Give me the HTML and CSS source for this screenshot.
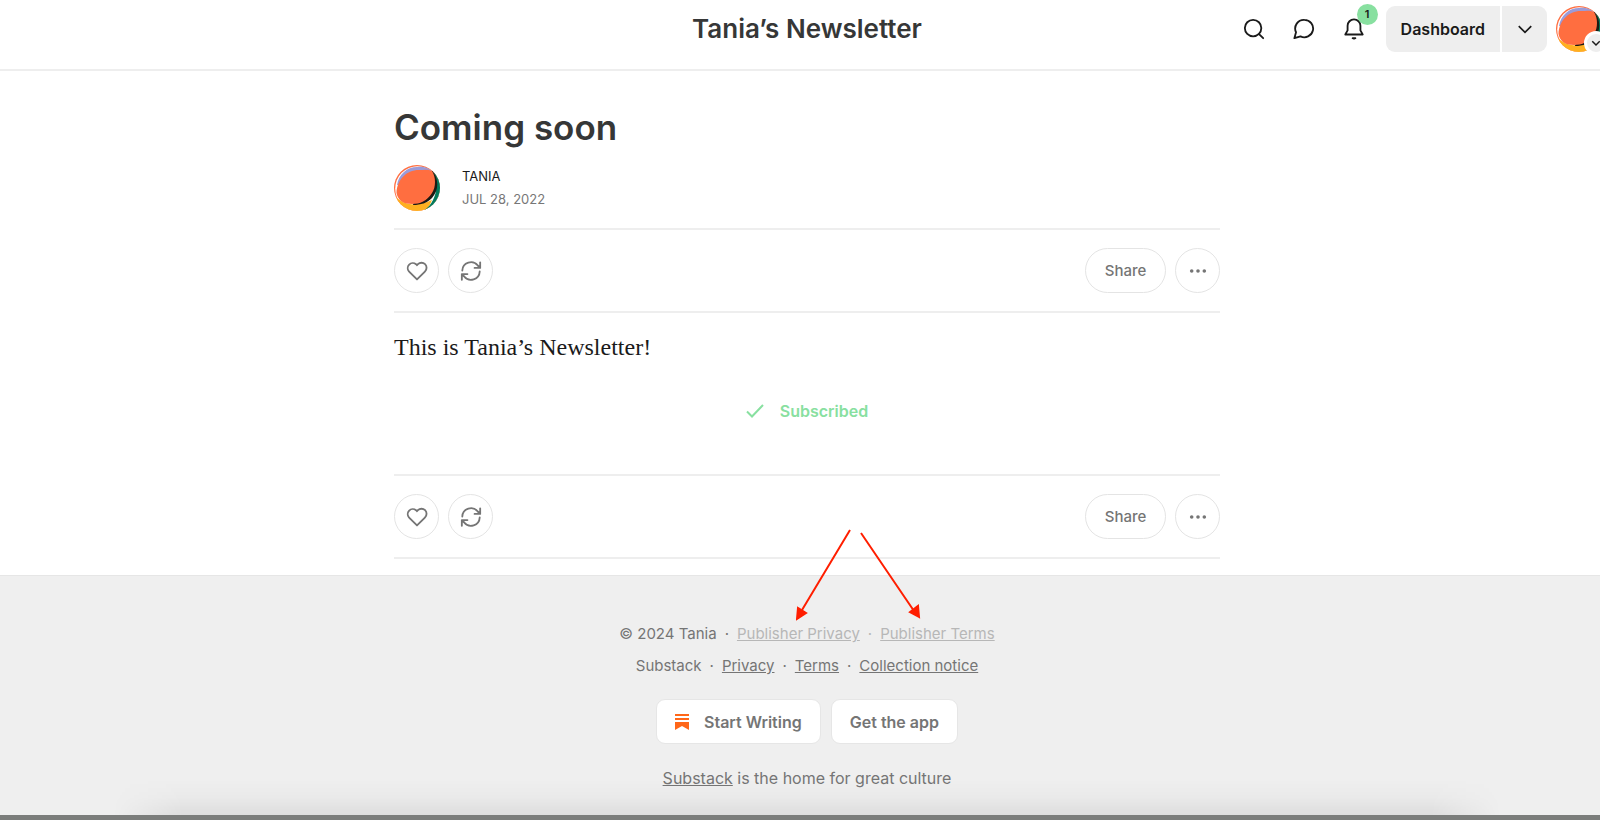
FILE: index.html
```html
<!DOCTYPE html>
<html lang="en">
	<head>
		<meta charset="UTF-8">
		<meta name="viewport" content="width=device-width, initial-scale=1">
		<title>Coming soon - Tania's Newsletter</title>
		<link rel="stylesheet" href="styles.css">
	</head>
	<body>
		<!-- shared icons -->
		<svg class="sprite" aria-hidden="true">
			<symbol id="icon-heart" viewBox="0 0 24 24">
				<path d="M20.8 4.6a5.5 5.5 0 0 0-7.8 0L12 5.7l-1.1-1.1a5.5 5.5 0 0 0-7.7 7.8l1 1L12 21.2l7.8-7.8 1-1a5.5 5.5 0 0 0 0-7.8z"/>
			</symbol>
			<symbol id="icon-restack" viewBox="0 0 24 24">
				<path d="M2.5 11.5A9.5 9.5 0 0 1 19.4 6L22 8.6M22 2.5v6.1h-6.1M21.5 12.5A9.5 9.5 0 0 1 4.6 18L2 15.4M2 21.5v-6.1h6.1"/>
			</symbol>
			<symbol id="icon-dots" viewBox="0 0 20 20">
				<circle cx="3" cy="10" r="2"/>
				<circle cx="10" cy="10" r="2"/>
				<circle cx="17" cy="10" r="2"/>
			</symbol>
			<symbol id="icon-chevron" viewBox="0 0 24 24">
				<path d="M4.5 8.5l7.5 7.5 7.5-7.5"/>
			</symbol>
			<symbol id="icon-avatar" viewBox="0 0 46 46">
				<clipPath id="round"><circle cx="23" cy="23" r="23"/></clipPath>
				<g clip-path="url(#round)">
					<rect width="46" height="46" fill="#ff6e40"/>
					<circle cx="23.5" cy="23.5" r="22.3" fill="#fff"/>
					<path d="M3 20C5 9 13 2 23 2c8-1 13 2 17 6L24 18z" fill="#9b9bd8"/>
					<path d="M2 32c8 8 20 10 36 3l-5 11H6z" fill="#ffb020"/>
					<path d="M39 4h8v42H29c5-3 8-7 10-11 5-9 3-20 0-31z" fill="#047a5c"/>
					<path d="M38 5c7 9 7 20 0 28-5 5-11 7-19 7l1-4c11-3 17-14 18-31z" fill="#1d1a14"/>
					<path d="M2.5 28C3 15 12 5 25 5c5 0 9-1 13 1 4 6 4 16 0 22-5 8-12 11-20 11-8 0-14-3-15.5-11z" fill="#ff6e40"/>
				</g>
			</symbol>
		</svg>

		<div class="page">
			<header class="topbar">
				<a class="site-name" href="#">Tania’s Newsletter</a>
				<div class="topbar-actions">
					<button class="icon-btn" type="button" aria-label="Search">
						<svg class="icon" viewBox="0 0 24 24"><circle cx="11" cy="11" r="9"/><path d="M17.5 17.5L22 22"/></svg>
					</button>
					<button class="icon-btn" type="button" aria-label="Chat">
						<svg class="icon" viewBox="0 0 24 24"><path d="M12.500 2a9.500 9.500 0 1 1-4.300 18L1.500 22l1.800-6.500A9.500 9.500 0 0 1 12.500 2z"/></svg>
					</button>
					<button class="icon-btn" type="button" aria-label="Notifications">
						<svg class="icon" viewBox="0 0 24 24"><path d="M5 13.500V8.500a7 7 0 0 1 14 0v5l2.500 4.500h-19L5 13.500z"/><path d="M10.500 22h3l-1.500.5z"/></svg>
						<span class="badge">1</span>
					</button>
					<div class="dashboard">
						<button class="dashboard-main" type="button">Dashboard</button>
						<button class="dashboard-more" type="button" aria-label="More">
							<svg class="chevron"><use href="#icon-chevron"/></svg>
						</button>
					</div>
					<button class="account" type="button" aria-label="Account">
						<svg class="avatar"><use href="#icon-avatar"/></svg>
						<span class="account-more"><svg><use href="#icon-chevron"/></svg></span>
					</button>
				</div>
			</header>

			<main class="post">
				<h1>Coming soon</h1>
				<div class="byline">
					<svg class="avatar"><use href="#icon-avatar"/></svg>
					<div class="byline-text">
						<a href="#">TANIA</a>
						<time datetime="2022-07-28">JUL 28, 2022</time>
					</div>
				</div>
				<div class="post-actions">
					<button class="round-btn" type="button" aria-label="Like"><svg class="icon"><use href="#icon-heart"/></svg></button>
					<button class="round-btn" type="button" aria-label="Restack"><svg class="icon"><use href="#icon-restack"/></svg></button>
					<button class="round-btn share" type="button">Share</button>
					<button class="round-btn" type="button" aria-label="More"><svg class="dots"><use href="#icon-dots"/></svg></button>
				</div>
				<p class="post-body">This is Tania’s Newsletter!</p>
				<div class="subscribed">
					<svg viewBox="0 0 18 14"><path d="M1 7.5l5 5L17 1"/></svg>
					<span>Subscribed</span>
				</div>
				<div class="post-actions">
					<button class="round-btn" type="button" aria-label="Like"><svg class="icon"><use href="#icon-heart"/></svg></button>
					<button class="round-btn" type="button" aria-label="Restack"><svg class="icon"><use href="#icon-restack"/></svg></button>
					<button class="round-btn share" type="button">Share</button>
					<button class="round-btn" type="button" aria-label="More"><svg class="dots"><use href="#icon-dots"/></svg></button>
				</div>
			</main>

			<footer class="footer">
				<div class="footer-line">
					<span>© 2024 Tania</span>
					<span>·</span>
					<a class="pale" href="#">Publisher Privacy</a>
					<span class="pale">·</span>
					<a class="pale" href="#">Publisher Terms</a>
					<svg class="arrows" viewBox="0 0 126 92">
						<path d="M54 1L6 81M65 4l53 78"/>
						<path class="head" d="M1 90l1-11 8 5zM123 88l-9-5 8-6z"/>
					</svg>
				</div>
				<div class="footer-line">
					<span>Substack</span>
					<span>·</span>
					<a href="#">Privacy</a>
					<span>·</span>
					<a href="#">Terms</a>
					<span>·</span>
					<a href="#">Collection notice</a>
				</div>
				<div class="footer-buttons">
					<a href="#">
						<svg class="logo" viewBox="0 0 14 16"><path d="M0 0h14v2H0zM0 4h14v2H0zM0 8h14v8l-7-4-7 4z"/></svg>
						Start Writing
					</a>
					<a href="#">Get the app</a>
				</div>
				<p class="tagline"><a href="#">Substack</a> is the home for great culture</p>
			</footer>
		</div>
	</body>
</html>
```
FILE: styles.css
```css
* {
	box-sizing: border-box;
}
body {
	margin: 0;
	overflow-x: hidden;
	background-color: #fff;
	color: #363737;
	font: 16px/24px Inter, "Liberation Sans", sans-serif;
}
a {
	color: inherit;
}
button {
	margin: 0;
	padding: 0;
	border: none;
	background: none;
	color: inherit;
	font: inherit;
	cursor: pointer;
}
svg {
	display: block;
	flex: none;
}
.sprite {
	position: absolute;
	width: 0;
	height: 0;
}
/* the page runs a little past the right side of the window */
.page {
	display: flex;
	flex-direction: column;
	width: calc(100% + 14px);
	min-height: 100vh;
}
.icon {
	width: 22px;
	height: 22px;
	fill: none;
	stroke: currentColor;
	stroke-width: 2;
	stroke-linecap: round;
	stroke-linejoin: round;
}
.avatar {
	width: 46px;
	height: 46px;
}

/* top bar */
.topbar {
	display: grid;
	grid-template-columns: 1fr auto 1fr;
	align-items: center;
	height: 71px;
	padding: 0 12px 12px;
	border-bottom: 2px solid #eee;
}
.site-name {
	grid-column: 2;
	font-size: 26px;
	font-weight: 600;
	line-height: 32px;
	text-decoration: none;
}
.topbar-actions {
	display: flex;
	justify-content: flex-end;
	align-items: center;
	color: #1a1a1a;
}
.icon-btn {
	position: relative;
	display: flex;
	justify-content: center;
	width: 50px;
}
.badge {
	position: absolute;
	top: -14px;
	right: 1px;
	width: 21px;
	height: 21px;
	border-radius: 50%;
	background-color: #88e0a0;
	font-size: 11px;
	font-weight: 600;
	line-height: 21px;
}
.dashboard {
	display: flex;
	gap: 2px;
	margin: 0 9px 0 7px;
	border-radius: 9px;
	overflow: hidden;
}
.dashboard button {
	height: 46px;
	background-color: #eee;
	font-weight: 600;
}
.dashboard-main {
	padding: 0 15px;
}
.dashboard-more {
	display: flex;
	justify-content: center;
	align-items: center;
	width: 45px;
}
.chevron,
.account-more svg {
	width: 20px;
	height: 20px;
	fill: none;
	stroke: #1a1a1a;
	stroke-width: 2;
}
.account {
	position: relative;
}
.account-more {
	position: absolute;
	right: -6px;
	bottom: -3px;
	display: flex;
	justify-content: center;
	align-items: center;
	width: 24px;
	height: 24px;
	border: 3px solid #fff;
	border-radius: 50%;
	background-color: #eee;
}
.account-more svg {
	width: 12px;
	height: 12px;
	stroke-width: 3;
}

/* post */
.post {
	width: 100%;
	max-width: 826px;
	margin: 0 auto;
	padding: 34px 0 16px;
}
h1 {
	margin: 0;
	font-size: 35px;
	font-weight: 600;
	line-height: 44px;
}
.byline {
	display: flex;
	align-items: center;
	gap: 22px;
	padding: 16px 0 17px;
	font-size: 13px;
	line-height: 23px;
}
.byline-text {
	display: flex;
	flex-direction: column;
	color: #777;
}
.byline-text a {
	color: #1a1a1a;
	text-decoration: none;
}
.post-actions {
	display: flex;
	gap: 9px;
	padding: 18px 0;
	border-top: 2px solid #eee;
	border-bottom: 2px solid #eee;
	color: #757575;
}
.round-btn {
	display: flex;
	justify-content: center;
	align-items: center;
	width: 45px;
	height: 45px;
	border: 1px solid #e4e4e4;
	border-radius: 23px;
}
.share {
	width: 81px;
	margin-left: auto;
	font-size: 15px;
	font-weight: 500;
}
.dots {
	width: 18px;
	height: 18px;
	fill: currentColor;
}
.post-body {
	margin: 17px 0 0;
	color: #1a1a1a;
	font: 24px/34px "Liberation Serif", serif;
}
.subscribed {
	display: flex;
	justify-content: center;
	align-items: center;
	gap: 16px;
	padding: 35px 0 51px;
	color: #88e0a0;
	font-weight: 600;
}
.subscribed svg {
	width: 18px;
	height: 14px;
	fill: none;
	stroke: currentColor;
	stroke-width: 2;
}

/* footer */
.footer {
	position: relative;
	flex: 1;
	padding: 42px 0 24px;
	border-top: 1px solid #e6e6e6;
	border-bottom: 5px solid #7b7d7b;
	background-color: #efefef;
	color: #757575;
}
/* soft shadow along the bottom edge */
.footer::after {
	content: "";
	position: absolute;
	bottom: 0;
	left: 7%;
	right: 7%;
	height: 36px;
	background: linear-gradient(transparent, rgba(0, 0, 0, 0.02) 50%, rgba(0, 0, 0, 0.07));
	-webkit-mask-image: linear-gradient(90deg, transparent, #000 70px, #000 calc(100% - 70px), transparent);
	mask-image: linear-gradient(90deg, transparent, #000 70px, #000 calc(100% - 70px), transparent);
	pointer-events: none;
}
.footer-line {
	position: relative;
	display: flex;
	justify-content: center;
	gap: 8px;
	padding: 4px 0;
	font-size: 15px;
}
.pale {
	color: #b7b7b7;
}
.arrows {
	position: absolute;
	left: 50%;
	bottom: 29px;
	width: 126px;
	height: 92px;
	margin-left: -11px;
	fill: none;
	stroke: #ff1e00;
	stroke-width: 2;
	pointer-events: none;
}
.arrows .head {
	fill: #ff1e00;
}
.footer-buttons {
	display: flex;
	justify-content: center;
	gap: 10px;
	padding: 17px 0 22px;
}
.footer-buttons a {
	display: flex;
	align-items: center;
	gap: 15px;
	height: 45px;
	padding: 0 18px;
	border: 1px solid #e6e6e6;
	border-radius: 9px;
	background-color: #fff;
	font-weight: 600;
	text-decoration: none;
}
.logo {
	width: 14px;
	height: 16px;
	fill: #ff6719;
}
.tagline {
	margin: 0;
	text-align: center;
}
```
